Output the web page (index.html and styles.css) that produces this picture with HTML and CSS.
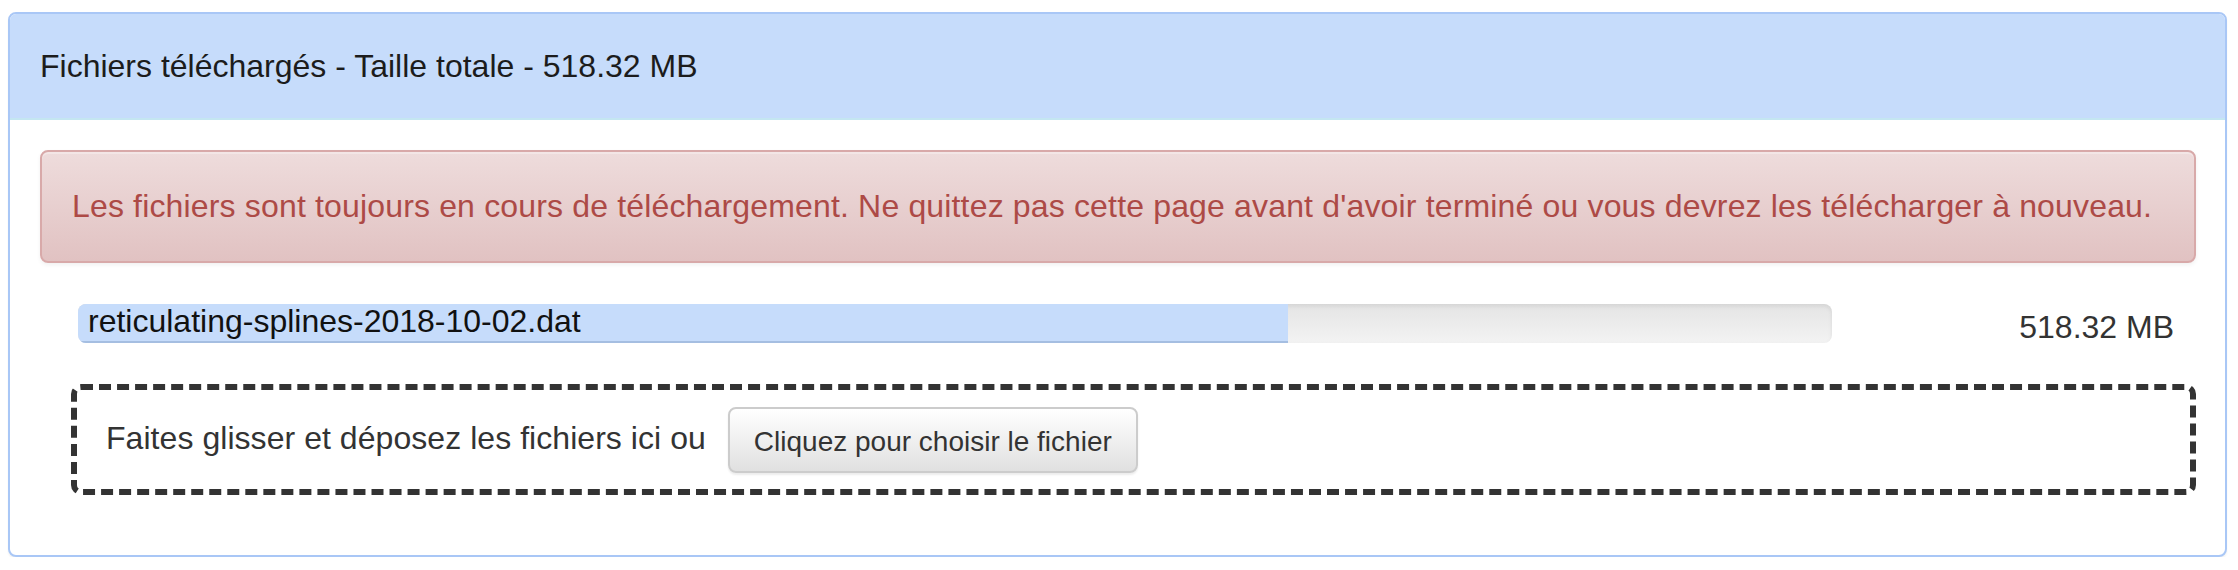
FILE: index.html
```html
<!DOCTYPE html>
<html lang="fr">
<head>
<meta charset="utf-8">
<title>Fichiers téléchargés</title>
<link rel="stylesheet" href="styles.css">
</head>
<body>
<div class="panel">
  <div class="panel-heading">Fichiers téléchargés - Taille totale - 518.32 MB</div>
  <div class="panel-body">
    <div class="alert">Les fichiers sont toujours en cours de téléchargement. Ne quittez pas cette page avant d'avoir terminé ou vous devrez les télécharger à nouveau.</div>
    <div class="file-row">
      <div class="progress">
        <div class="progress-bar" style="width: 69%;"><span class="file-name">reticulating-splines-2018-10-02.dat</span></div>
      </div>
      <div class="file-size">518.32 MB</div>
    </div>
    <div class="dropzone">
      <span class="drop-text">Faites glisser et déposez les fichiers ici ou</span>
      <button class="btn" type="button">Cliquez pour choisir le fichier</button>
    </div>
  </div>
</div>
</body>
</html>
```

FILE: styles.css
```css
html, body {
  margin: 0;
  padding: 0;
  background: #ffffff;
}

body {
  font-family: "Liberation Sans", Arial, Helvetica, sans-serif;
  font-size: 32px;
  color: #333333;
}

.panel {
  margin: 12px 11px 0 8px;
  border: 2px solid #a9c7f6;
  border-radius: 8px;
  background: #ffffff;
  box-shadow: 0 2px 2px rgba(0, 0, 0, 0.05);
  overflow: hidden;
}

.panel-heading {
  background: #c6dcfb;
  border-bottom: 2px solid #c4e6f1;
  padding: 32px 30px;
  line-height: 40px;
  color: #1c1c1c;
}

.panel-body {
  padding: 30px 29px 60px 30px;
}

.alert {
  border: 2px solid #d8a9a9;
  border-radius: 8px;
  background: linear-gradient(to bottom, #eedcdc 0%, #e1c2c2 100%);
  box-shadow: inset 0 2px 0 rgba(255, 255, 255, 0.3), 0 2px 4px rgba(0, 0, 0, 0.06);
  color: #ad4a46;
  padding: 31px 30px 32px 30px;
  line-height: 46px;
  letter-spacing: 0.16px;
  white-space: nowrap;
}

.file-row {
  display: flex;
  align-items: flex-start;
  margin-top: 41px;
  padding: 0 22px 0 38px;
}

.progress {
  flex: 1;
  height: 39px;
  border-radius: 8px;
  background: linear-gradient(to bottom, #e4e4e4 0%, #f3f3f3 100%);
  box-shadow: inset 0 2px 4px rgba(0, 0, 0, 0.08);
  overflow: hidden;
  display: flex;
}

.progress-bar {
  height: 37px;
  background: #c6dcfb;
  border-bottom: 2px solid #a5bee1;
  white-space: nowrap;
}

.file-name {
  display: block;
  padding-left: 10px;
  line-height: 35px;
  color: #111111;
}

.file-size {
  width: 342px;
  text-align: right;
  padding-top: 4px;
  line-height: 39px;
  color: #333333;
}

.dropzone {
  display: flex;
  align-items: center;
  gap: 22px;
  margin: 37px 0 0 31px;
  height: 99px;
  border: 6px dashed #333333;
  border-radius: 10px;
  padding: 0 29px;
}

.drop-text {
  line-height: 42px;
  margin-bottom: 4px;
  letter-spacing: 0.05px;
  color: #333333;
}

.btn {
  font-family: "Liberation Sans", Arial, Helvetica, sans-serif;
  font-size: 28px;
  line-height: 40px;
  color: #333333;
  padding: 13px 24px 9px 24px;
  border: 2px solid #cccccc;
  border-radius: 8px;
  background: linear-gradient(to bottom, #ffffff 0%, #e0e0e0 100%);
  box-shadow: inset 0 2px 0 rgba(255, 255, 255, 0.15), 0 2px 2px rgba(0, 0, 0, 0.075);
  cursor: pointer;
}
```
